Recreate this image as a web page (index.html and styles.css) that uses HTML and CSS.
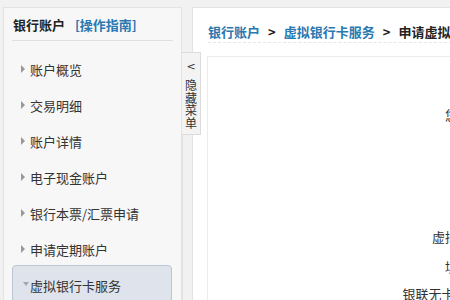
FILE: index.html
```html
<!DOCTYPE html>
<html lang="zh-CN">
<head>
  <meta charset="UTF-8" />
  <title>虚拟银行卡服务</title>
  <link rel="stylesheet" href="styles.css">
</head>
<body>
  <div class="page">
    <div class="sidebar">
      <div class="side-head">
        <strong>银行账户</strong>
        <a class="guide" href="#">[操作指南]</a>
      </div>
      <ul class="menu">
        <li class="item">账户概览</li>
        <li class="item">交易明细</li>
        <li class="item">账户详情</li>
        <li class="item">电子现金账户</li>
        <li class="item">银行本票/汇票申请</li>
        <li class="item">申请定期账户</li>
        <li class="item active">虚拟银行卡服务</li>
      </ul>
    </div>

    <div class="gutter">
      <div class="toggle">
        <span class="arrow">&lt;</span>
        <span class="vtext">隐藏菜单</span>
      </div>
    </div>

    <div class="main">
      <div class="crumbs">
        <a href="#">银行账户</a><span class="sep">&gt;</span><a href="#">虚拟银行卡服务</a><span class="sep">&gt;</span><b>申请虚拟银行卡</b>
      </div>
      <div class="content">
        <div class="row r1"><span class="label">您的账户：</span></div>
        <div class="row r2"><span class="label">虚拟卡类型：</span></div>
        <div class="row r3"><span class="label">填写金额：</span></div>
        <div class="row r4"><span class="label">银联无卡支付开通:</span></div>
      </div>
    </div>
  </div>
</body>
</html>
```

FILE: styles.css
```css
body {
  margin: 0;
  background: #f1f1f1;
  font-family: "Noto Sans CJK SC", "Noto Sans", sans-serif;
  font-size: 13px;
  color: #333;
  overflow: hidden;
}
.page {
  display: flex;
  padding: 7px 0 0 3px;
  height: 293px;
}
.sidebar {
  flex: none;
  width: 177px;
  background: #f7f7f7;
  border: 1px solid #e2e2e2;
  border-bottom: none;
}
.side-head {
  margin: 0 8px;
  padding: 7px 0 0 1px;
  height: 25px;
  line-height: 20px;
  border-bottom: 1px solid #e0e0e0;
}
.side-head strong {
  color: #222;
  margin-right: 7px;
}
.guide {
  color: #2a78b0;
  font-weight: bold;
  text-decoration: none;
}
.menu {
  list-style: none;
  margin: 11px 0 0;
  padding: 0;
}
.item {
  position: relative;
  height: 36px;
  line-height: 36px;
  padding-left: 26px;
  color: #333;
}
.item::before {
  content: "";
  position: absolute;
  left: 17px;
  top: 13px;
  border-left: 4px solid #999;
  border-top: 4px solid transparent;
  border-bottom: 4px solid transparent;
}
.item.active {
  margin: -3px 9px 0 8px;
  padding-left: 17px;
  height: 40px;
  line-height: 40px;
  background: #dfe4ec;
  border: 1px solid #bcc5d2;
  border-radius: 4px;
}
.item.active::before {
  left: 10px;
  top: 16px;
  border-top: 4px solid #a0a8b4;
  border-left: 3px solid transparent;
  border-right: 3px solid transparent;
  border-bottom: none;
}
.gutter {
  flex: none;
  width: 9px;
  position: relative;
  border-left: 1px solid #e2e2e2;
  margin-top: 45px;
  z-index: 1;
}
.toggle {
  position: absolute;
  left: -1px;
  top: 0;
  width: 18px;
  height: 81px;
  background: #f3f3f3;
  border: 1px solid #dcdcdc;
  border-left: none;
  text-align: center;
  color: #333;
}
.arrow {
  display: block;
  margin-top: 7px;
  font-size: 11px;
  line-height: 14px;
  font-family: "DejaVu Sans", sans-serif;
}
.vtext {
  display: block;
  width: 12px;
  margin: 5px auto 0;
  font-size: 12px;
  line-height: 12.5px;
}
.main {
  flex: none;
  width: 600px;
  background: #fff;
  border: 1px solid #e3e3e3;
  border-bottom: none;
}
.crumbs {
  margin: 0 15px;
  padding-top: 14px;
  height: 20px;
  line-height: 20px;
  border-bottom: 1px dashed #e6e6e6;
  font-size: 13px;
  white-space: nowrap;
}
.crumbs a {
  color: #2a78b0;
  text-decoration: none;
  font-weight: bold;
}
.crumbs b {
  color: #222;
}
.sep {
  margin: 0 8px;
  color: #222;
  font-weight: bold;
}
.content {
  margin: 13px 0 0 14px;
  padding-top: 48px;
  border-top: 1px solid #ececec;
  border-left: 1px solid #ececec;
  height: 300px;
}
.row {
  line-height: 20px;
}
.label {
  display: inline-block;
  width: 302px;
  text-align: right;
}
.r1 { height: 122px; }
.r2 { height: 30px; }
.r3 { height: 27px; }
```
